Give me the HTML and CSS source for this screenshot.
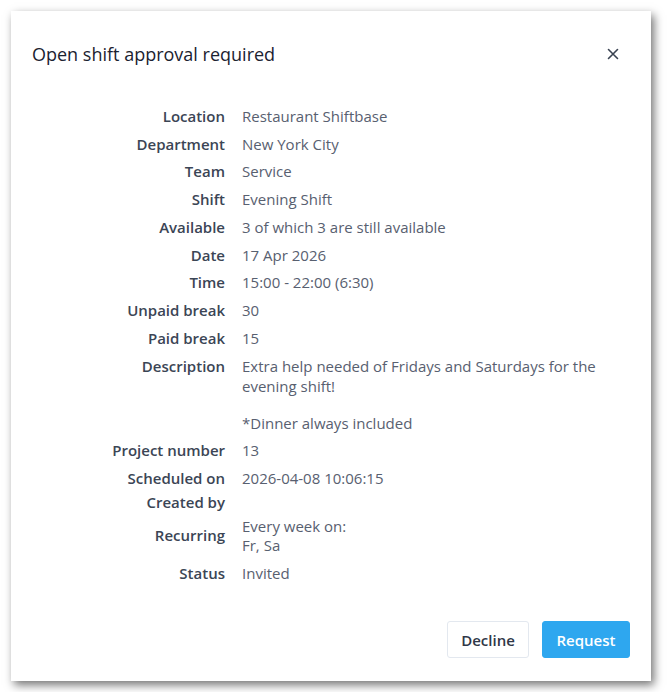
FILE: index.html
```html
<!DOCTYPE html>
<html>
<head>
<meta charset="utf-8">
<link rel="stylesheet" href="styles.css">
</head>
<body>
<div class="modal">
  <div class="modal-header">
    <h1 class="title">Open shift approval required</h1>
    <button class="close" aria-label="Close">
      <svg width="12" height="12" viewBox="0 0 12 12"><path d="M1.5 1.5 L10.5 10.5 M10.5 1.5 L1.5 10.5" stroke="#3a4352" stroke-width="1.6" stroke-linecap="round"/></svg>
    </button>
  </div>
  <div class="details">
    <div class="label">Location</div><div class="value">Restaurant Shiftbase</div>
    <div class="label">Department</div><div class="value">New York City</div>
    <div class="label">Team</div><div class="value">Service</div>
    <div class="label">Shift</div><div class="value">Evening Shift</div>
    <div class="label">Available</div><div class="value">3 of which 3 are still available</div>
    <div class="label">Date</div><div class="value">17 Apr 2026</div>
    <div class="label">Time</div><div class="value">15:00 - 22:00 (6:30)</div>
    <div class="label">Unpaid break</div><div class="value">30</div>
    <div class="label">Paid break</div><div class="value">15</div>
    <div class="label top">Description</div><div class="value desc"><p>Extra help needed of Fridays and Saturdays for the evening shift!</p><p>*Dinner always included</p></div>
    <div class="label">Project number</div><div class="value">13</div>
    <div class="label">Scheduled on</div><div class="value">2026-04-08 10:06:15</div>
    <div class="label compact">Created by</div><div class="value compact"></div>
    <div class="label">Recurring</div><div class="value">Every week on:<br>Fr, Sa</div>
    <div class="label">Status</div><div class="value">Invited</div>
  </div>
  <div class="footer">
    <button class="btn btn-secondary">Decline</button>
    <button class="btn btn-primary">Request</button>
  </div>
</div>
</body>
</html>
```
FILE: styles.css
```css
html, body {
  margin: 0;
  padding: 0;
  background: #ffffff;
}
body {
  font-family: "Open Sans", "Liberation Sans", sans-serif;
  padding: 11px;
}
.modal {
  width: 640px;
  height: 670px;
  background: #ffffff;
  box-shadow: 3px 4px 9px rgba(0, 0, 0, 0.55);
  display: flex;
  flex-direction: column;
  box-sizing: border-box;
}
.modal-header {
  display: flex;
  align-items: center;
  justify-content: space-between;
  padding: 31px 32px 0 21px;
}
.title {
  margin: 0;
  font-size: 18px;
  line-height: 24px;
  font-weight: 500;
  color: #1b2230;
}
.close {
  border: none;
  background: none;
  padding: 0;
  width: 12px;
  height: 12px;
  display: flex;
  cursor: pointer;
}
.details {
  display: grid;
  grid-template-columns: 214px 1fr;
  column-gap: 17px;
  padding: 37px 32px 0 0;
  font-size: 15px;
  line-height: 19.7px;
}
.label {
  text-align: right;
  font-weight: 600;
  color: #3b4555;
  padding: 4px 0;
  align-self: center;
}
.label.top {
  align-self: start;
  padding-top: 5px;
}
.value {
  color: #586070;
  padding: 4px 0;
}
.value.desc {
  padding-top: 5px;
}
.desc p {
  margin: 0 0 17px 0;
}
.desc p:last-child {
  margin-bottom: 0;
}
.compact {
  padding: 0;
}
.footer {
  margin-top: auto;
  display: flex;
  justify-content: flex-end;
  gap: 13px;
  padding: 0 21px 23px 0;
}
.btn {
  font-family: "Open Sans", "Liberation Sans", sans-serif;
  font-size: 15px;
  font-weight: 600;
  height: 37px;
  padding: 0 13px;
  border-radius: 3px;
  cursor: pointer;
}
.btn-secondary {
  background: #ffffff;
  border: 1px solid #e3e8ef;
  color: #2f3747;
  width: 82px;
}
.btn-primary {
  background: #2ea7ef;
  border: 1px solid #2ea7ef;
  color: #ffffff;
  width: 88px;
}
```
